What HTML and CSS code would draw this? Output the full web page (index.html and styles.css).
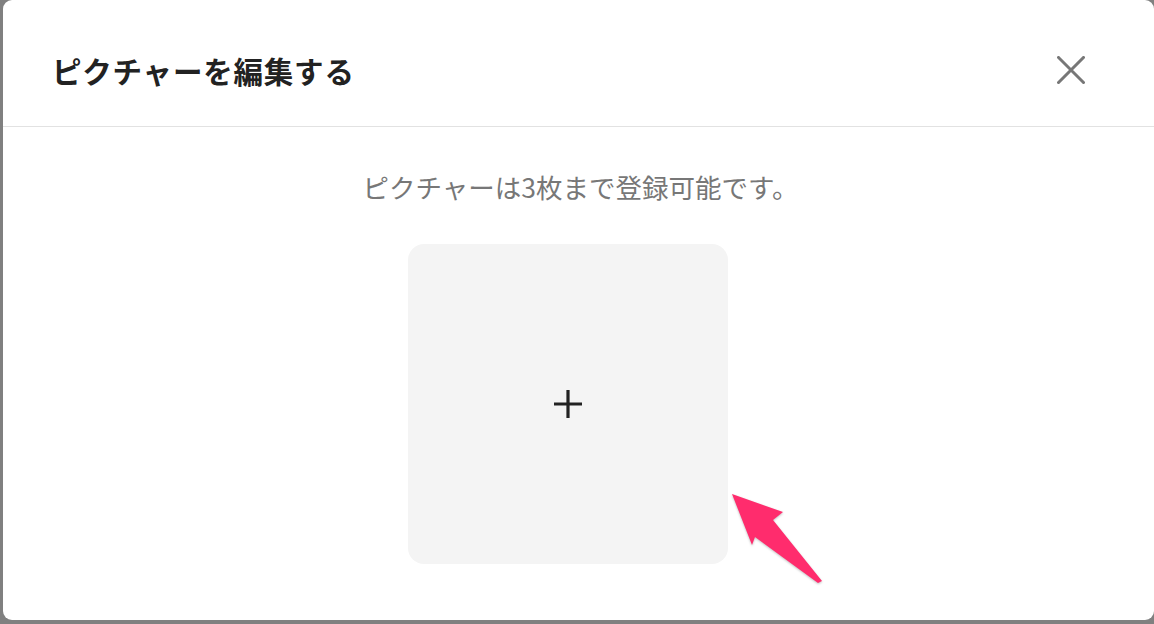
FILE: index.html
```html
<!DOCTYPE html>
<html lang="ja">
<head>
<meta charset="utf-8">
<title>ピクチャーを編集する</title>
<link rel="stylesheet" href="styles.css">
</head>
<body>
<div class="backdrop">
  <div class="modal">
    <div class="modal-header">
      <h2 class="modal-title">ピクチャーを編集する</h2>
      <button class="close-btn" aria-label="閉じる">
        <svg width="28" height="28" viewBox="0 0 28 28"><path d="M1.5 1.5 L26.5 26.5 M26.5 1.5 L1.5 26.5" stroke="#777" stroke-width="3" stroke-linecap="square" fill="none"/></svg>
      </button>
    </div>
    <div class="modal-body">
      <p class="note">ピクチャーは3枚まで登録可能です。</p>
      <div class="pictures">
        <button class="add-card" aria-label="追加">
          <svg width="30" height="30" viewBox="0 0 30 30"><path d="M15 1 V29 M1 15 H29" stroke="#222" stroke-width="3.2" fill="none"/></svg>
        </button>
      </div>
    </div>
  </div>
  <svg class="annot-arrow" width="120" height="120" viewBox="0 0 120 120">
    <polygon points="12,14 63,32 53,40 102,101 98,103 35,57 32,65" fill="#ff2c6d"/>
  </svg>
</div>
</body>
</html>
```

FILE: styles.css
```css
html, body {
  margin: 0;
  padding: 0;
  width: 1154px;
  height: 624px;
  overflow: hidden;
  background: #808080;
  font-family: "Noto Sans CJK JP", "Noto Sans", sans-serif;
}

.backdrop {
  position: relative;
  width: 1154px;
  height: 624px;
  padding-left: 3px;
  box-sizing: border-box;
}

.modal {
  width: 1151px;
  height: 620px;
  background: #fff;
  border-radius: 9px;
  display: flex;
  flex-direction: column;
}

.modal-header {
  height: 127px;
  box-sizing: border-box;
  padding: 14px 69px 0 49px;
  border-bottom: 1px solid #e2e2e2;
  display: flex;
  align-items: center;
  justify-content: space-between;
}

.modal-title {
  margin: 0;
  font-size: 29.5px;
  font-weight: 700;
  color: #222;
  letter-spacing: 0.8px;
}

.close-btn {
  border: 0;
  background: none;
  padding: 0;
  width: 28px;
  height: 28px;
  display: flex;
}

.modal-body {
  padding-top: 42px;
  display: flex;
  flex-direction: column;
  align-items: center;
}

.note {
  margin: 0;
  font-size: 26.5px;
  line-height: 36px;
  color: #777;
  padding-left: 4px;
}

.pictures {
  margin-top: 39px;
  display: flex;
  justify-content: center;
  padding-right: 22px;
}

.add-card {
  width: 320px;
  height: 320px;
  border: 0;
  border-radius: 16px;
  background: #f4f4f4;
  display: flex;
  align-items: center;
  justify-content: center;
  padding: 0;
}

.annot-arrow {
  position: absolute;
  left: 720px;
  top: 480px;
  filter: drop-shadow(0 1px 1px rgba(0,0,0,0.25));
}
```
